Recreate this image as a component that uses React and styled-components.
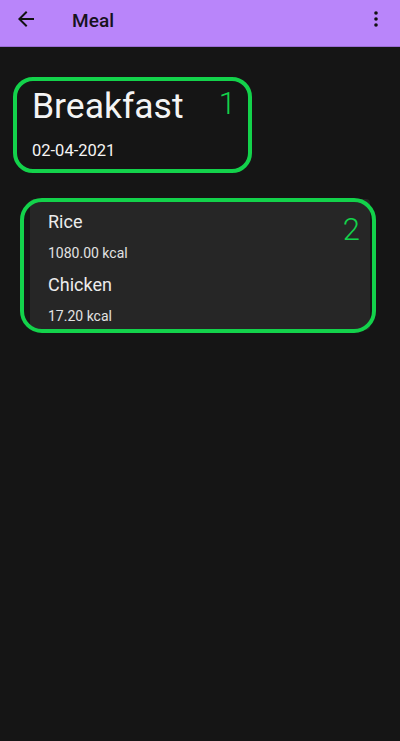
import React from "react";
import styled, { createGlobalStyle } from "styled-components";

const Global = createGlobalStyle`
  html, body { margin: 0; padding: 0; background: #151515; }
  body { font-family: Roboto, "Noto Sans", sans-serif; -webkit-font-smoothing: antialiased; }
  * { box-sizing: border-box; }
`;

const Page = styled.div`
  width: 400px;
  min-height: 741px;
  background: #151515;
  display: flex;
  flex-direction: column;
`;

const Toolbar = styled.header`
  height: 47px;
  background: #b985fa;
  border-bottom: 1px solid #9a6dd4;
  display: flex;
  align-items: center;
  padding: 0 12px 0 14px;
  color: #17121d;
`;

const IconButton = styled.button`
  width: 24px;
  height: 24px;
  padding: 0;
  border: 0;
  background: none;
  display: flex;
  align-items: center;
  justify-content: center;
  color: #111;
  margin-top: -8px;
`;

const Title = styled.h1`
  margin: 0 0 0 34px;
  font-size: 19px;
  font-weight: 500;
  letter-spacing: 0.1px;
  flex: 1;
  margin-top: -6px;
`;

const Content = styled.main`
  display: flex;
  flex-direction: column;
  padding: 39px 30px 0 30px;
`;

const HeaderBlock = styled.section`
  position: relative;
  padding-left: 2px;
  color: #f4f4f4;
`;

const Heading = styled.div`
  font-size: 35.5px;
  line-height: 40px;
  font-weight: 400;
`;

const DateText = styled.div`
  margin-top: 15px;
  font-size: 16.5px;
  line-height: 20px;
`;

const Annotation = styled.div`
  position: absolute;
  top: ${(p) => p.$top}px;
  left: ${(p) => p.$left}px;
  width: ${(p) => p.$w}px;
  height: ${(p) => p.$h}px;
  border: 4px solid #13d24b;
  border-radius: ${(p) => p.$r}px;
  pointer-events: none;
`;

const AnnotationNumber = styled.span`
  position: absolute;
  top: ${(p) => p.$top}px;
  right: ${(p) => p.$right}px;
  font-size: 31px;
  line-height: 36px;
  font-weight: 300;
  color: #13d24b;
`;

const Card = styled.section`
  position: relative;
  margin-top: 38px;
  width: 340px;
  background: #262626;
  border-radius: 4px;
  padding: 11px 18px 5px 18px;
  display: flex;
  flex-direction: column;
  gap: 11px;
`;

const Item = styled.div`
  display: flex;
  flex-direction: column;
  gap: 10px;
`;

const ItemName = styled.div`
  font-size: 18px;
  line-height: 24px;
  color: #ececec;
`;

const ItemKcal = styled.div`
  font-size: 14px;
  line-height: 18px;
  color: #e2e2e2;
`;

const ArrowIcon = () => (
  <svg width="24" height="24" viewBox="0 0 24 24" fill="currentColor">
    <path d="M20 11H7.83l5.59-5.59L12 4l-8 8 8 8 1.41-1.41L7.83 13H20v-2z" />
  </svg>
);

const MoreIcon = () => (
  <svg width="24" height="24" viewBox="0 0 24 24" fill="currentColor">
    <circle cx="12" cy="6" r="1.8" />
    <circle cx="12" cy="12" r="1.8" />
    <circle cx="12" cy="18" r="1.8" />
  </svg>
);

const items = [
  { name: "Rice", kcal: "1080.00 kcal" },
  { name: "Chicken", kcal: "17.20 kcal" },
];

export default function App() {
  return (
    <>
      <Global />
      <Page>
        <Toolbar>
          <IconButton aria-label="Back">
            <ArrowIcon />
          </IconButton>
          <Title>Meal</Title>
          <IconButton aria-label="More">
            <MoreIcon />
          </IconButton>
        </Toolbar>
        <Content>
          <HeaderBlock>
            <Heading>Breakfast</Heading>
            <DateText>02-04-2021</DateText>
            <Annotation $top={-9} $left={-17} $w={239} $h={96} $r={20}>
              <AnnotationNumber $top={5} $right={12}>1</AnnotationNumber>
            </Annotation>
          </HeaderBlock>
          <Card>
            {items.map((it) => (
              <Item key={it.name}>
                <ItemName>{it.name}</ItemName>
                <ItemKcal>{it.kcal}</ItemKcal>
              </Item>
            ))}
            <Annotation $top={-1} $left={-10} $w={356} $h={135} $r={22}>
              <AnnotationNumber $top={10} $right={12}>2</AnnotationNumber>
            </Annotation>
          </Card>
        </Content>
      </Page>
    </>
  );
}
